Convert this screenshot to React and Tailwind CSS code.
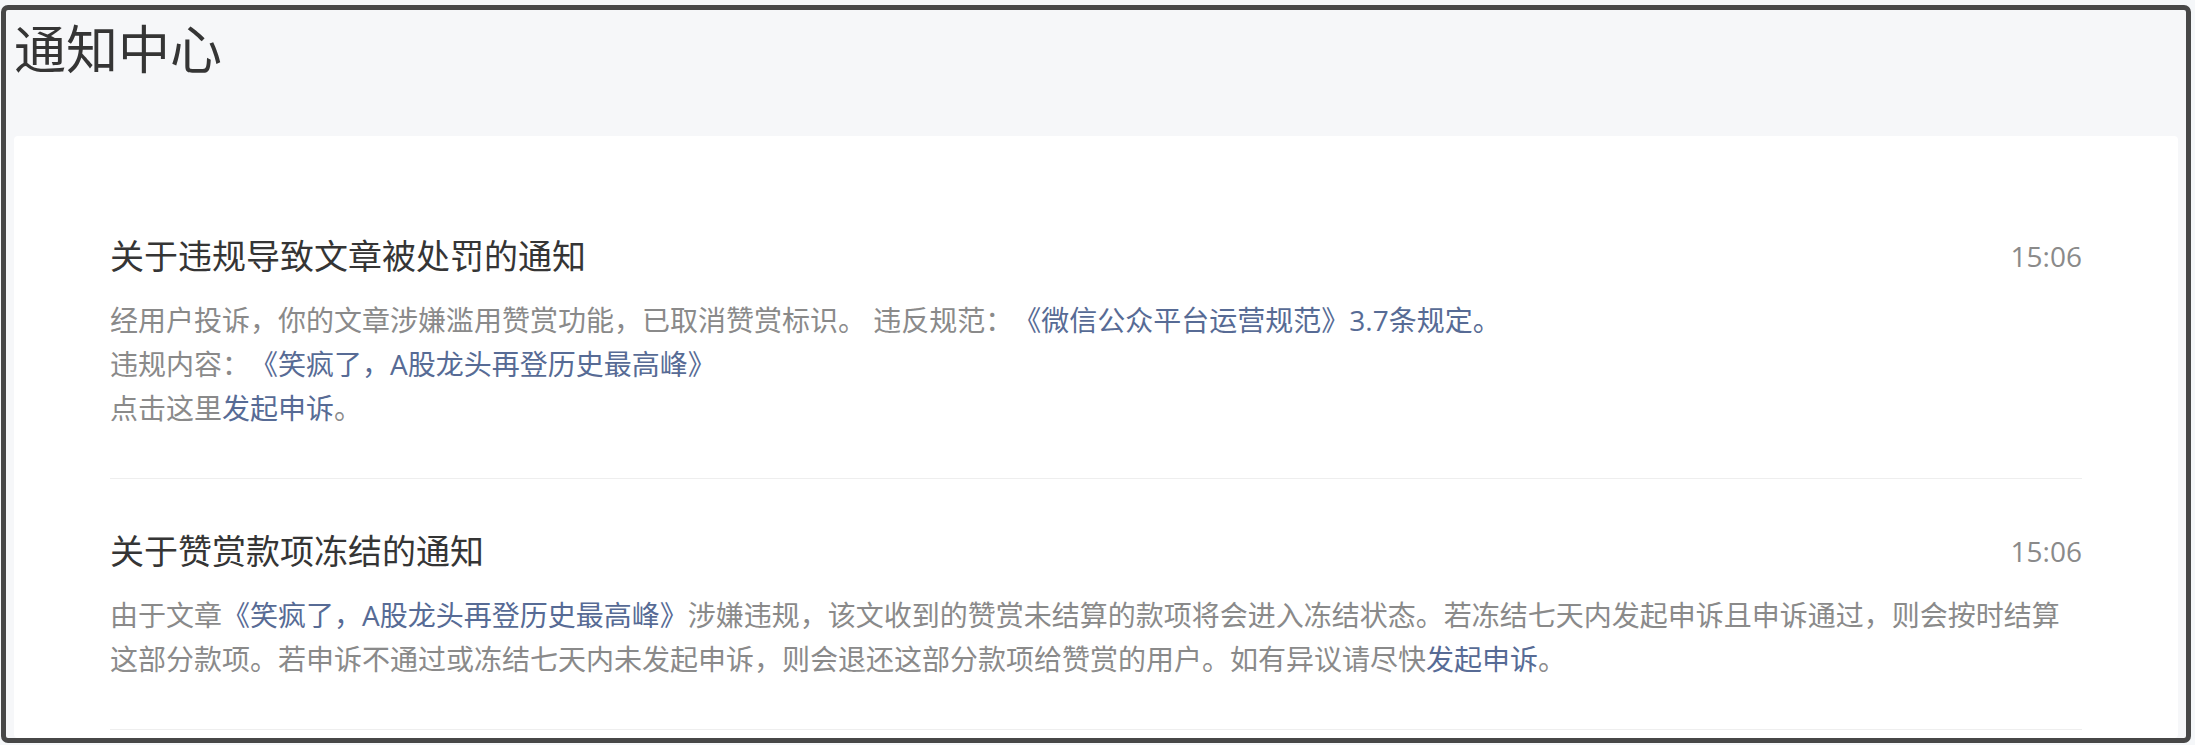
import React from 'react';

const notices = [
  {
    id: 1,
    title: '关于违规导致文章被处罚的通知',
    time: '15:06',
    lines: [
      [
        { text: '经用户投诉，你的文章涉嫌滥用赞赏功能，已取消赞赏标识。 违反规范：' },
        { text: '《微信公众平台运营规范》3.7条规定。', link: true },
      ],
      [
        { text: '违规内容：' },
        { text: '《笑疯了，A股龙头再登历史最高峰》', link: true },
      ],
      [
        { text: '点击这里' },
        { text: '发起申诉', link: true },
        { text: '。' },
      ],
    ],
  },
  {
    id: 2,
    title: '关于赞赏款项冻结的通知',
    time: '15:06',
    lines: [
      [
        { text: '由于文章' },
        { text: '《笑疯了，A股龙头再登历史最高峰》', link: true },
        { text: '涉嫌违规，该文收到的赞赏未结算的款项将会进入冻结状态。若冻结七天内发起申诉且申诉通过，则会按时结算这部分款项。若申诉不通过或冻结七天内未发起申诉，则会退还这部分款项给赞赏的用户。如有异议请尽快' },
        { text: '发起申诉', link: true },
        { text: '。' },
      ],
    ],
  },
];

const NoticeItem = ({ notice }) => (
  <div className="pt-[48px] pb-[48px] border-b border-[#eeeeee]">
    <div className="flex items-center justify-between">
      <h3 className="text-[34px] leading-[48px] text-[#353535] font-normal">{notice.title}</h3>
      <span className="text-[28px] leading-[48px] text-[#8a8a8a]">{notice.time}</span>
    </div>
    <div className="mt-[18px] text-[28px] leading-[44px] text-[#8a8a8a]">
      {notice.lines.map((line, i) => (
        <p key={i}>
          {line.map((part, j) =>
            part.link ? (
              <a key={j} className="text-[#576b95] cursor-pointer">{part.text}</a>
            ) : (
              <span key={j}>{part.text}</span>
            )
          )}
        </p>
      ))}
    </div>
  </div>
);

export default function App() {
  return (
    <div className="min-h-screen bg-[#f5f7f9] pt-[5px] pl-[1px] font-['Open_Sans','Noto_Sans_CJK_SC',sans-serif] [text-spacing-trim:space-all]">
      <div className="w-[2190px] h-[738px] border-[5px] border-[#474747] rounded-[7px] overflow-hidden bg-[#f6f7f9] flex flex-col">
        {/* Page header */}
        <h1 className="pl-[8px] text-[52px] leading-[78px] text-[#353535] font-normal">通知中心</h1>

        {/* Notice list */}
        <div className="mt-[48px] mx-[8px] flex-1 bg-white rounded-[4px] px-[96px] pt-[48px]">
          {notices.map((n) => (
            <NoticeItem key={n.id} notice={n} />
          ))}
        </div>
      </div>
    </div>
  );
}
